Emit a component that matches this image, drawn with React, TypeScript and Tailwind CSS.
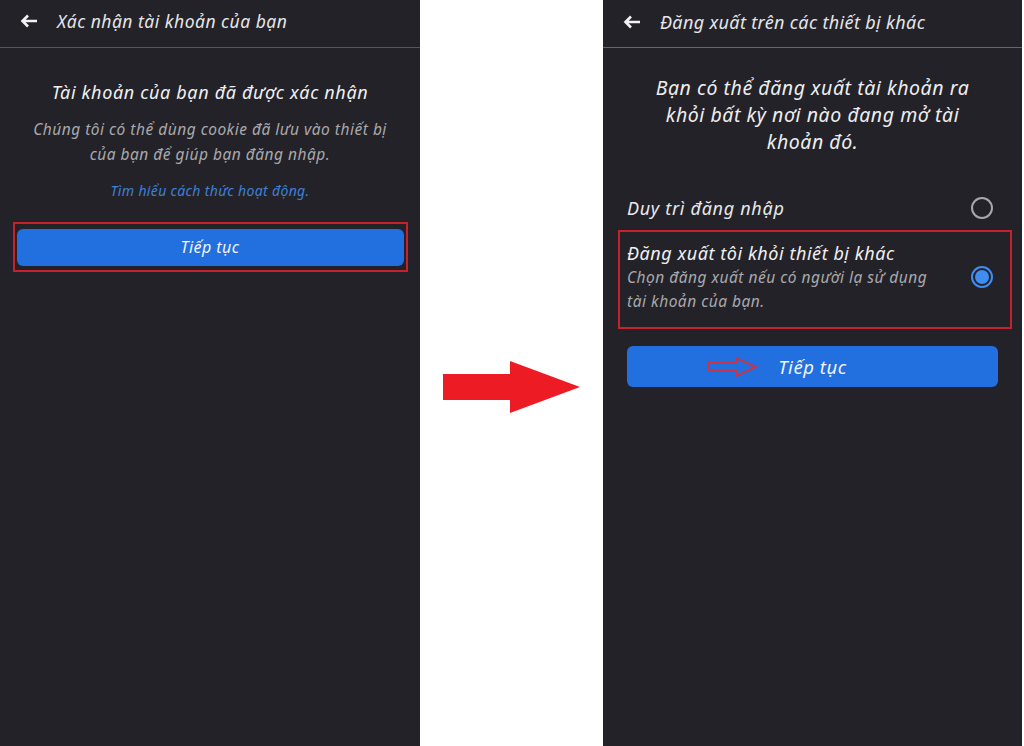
export default function App() {
  return (
    <div className="flex h-[746px] w-[1024px] overflow-hidden bg-white font-['Noto_Sans',sans-serif] italic text-[#e8e8ea]">
      {/* Left phone */}
      <section className="flex h-full w-[420px] flex-col bg-[#232228]">
        <header className="flex h-[48px] shrink-0 items-center border-b border-[#55555a] pb-[6px] pl-[20px]">
          <BackArrow />
          <h1 className="ml-[19px] text-[17.5px] leading-[22px] tracking-[0.5px] text-[#e6e6e8]">Xác nhận tài khoản của bạn</h1>
        </header>
        <div className="flex flex-col items-center px-[12px] pt-[31px]">
          <h2 className="text-[18px] leading-[26px] tracking-[0.65px] text-[#f0f0f2]">Tài khoản của bạn đã được xác nhận</h2>
          <p className="mt-[12px] text-center text-[15.5px] leading-[25px] tracking-[0.5px] text-[#a9a9ad]">
            Chúng tôi có thể dùng cookie đã lưu vào thiết bị
            <br />
            của bạn để giúp bạn đăng nhập.
          </p>
          <a className="mt-[13px] text-[14px] leading-[22px] tracking-[0.35px] text-[#3f80d8]">Tìm hiểu cách thức hoạt động.</a>
          <div className="mt-[20px] flex h-[50px] w-[395px] items-center justify-center border-2 border-[#c8202c] px-[2px]">
            <button className="flex h-[37px] w-full items-center justify-center rounded-[6px] bg-[#226fdf] text-[16px] tracking-[0.45px] text-[#f2f4f8] italic">Tiếp tục</button>
          </div>
        </div>
      </section>

      {/* Gutter */}
      <div className="flex h-full w-[183px] items-start justify-center pt-[361px]">
        <svg width="138" height="53" viewBox="0 0 138 53">
          <polygon points="0,13 67,13 67,0 137,26 67,52 67,39 0,39" fill="#ed1c24" />
        </svg>
      </div>

      {/* Right phone */}
      <section className="flex h-full w-[419px] flex-col bg-[#232228]">
        <header className="flex h-[48px] shrink-0 items-center border-b border-[#66666b] pb-[3px] pl-[20px]">
          <BackArrow />
          <h1 className="ml-[19px] text-[18px] leading-[22px] tracking-[0.35px] text-[#e6e6e8]">Đăng xuất trên các thiết bị khác</h1>
        </header>
        <div className="flex flex-col px-[24px] pt-[26px]">
          <h2 className="text-center text-[19.5px] leading-[27px] tracking-[0.55px] text-[#eeeef0]">
            Bạn có thể đăng xuất tài khoản ra
            <br />
            khỏi bất kỳ nơi nào đang mở tài
            <br />
            khoản đó.
          </h2>
          <div className="mt-[40px] flex h-[26px] items-center justify-between pr-[5px]">
            <span className="text-[18px] tracking-[0.7px] text-[#e8e8ea]">Duy trì đăng nhập</span>
            <span className="h-[22px] w-[22px] rounded-full border-2 border-[#a8a8ac]" />
          </div>
          <div className="mt-[9px] ml-[-9px] mr-[-14px] flex h-[99px] items-center justify-between border-2 border-[#c8202c] pb-[5px] pl-[7px] pr-[17px]">
            <div>
              <div className="text-[18px] leading-[24px] tracking-[0.55px] text-[#f0f0f2]">Đăng xuất tôi khỏi thiết bị khác</div>
              <p className="text-[15.5px] leading-[24px] tracking-[0.5px] text-[#a9a9ad]">
                Chọn đăng xuất nếu có người lạ sử dụng
                <br />
                tài khoản của bạn.
              </p>
            </div>
            <span className="flex h-[22px] w-[22px] items-center justify-center rounded-full border-2 border-[#3f8cf2]">
              <span className="h-[14px] w-[14px] rounded-full bg-[#3f8cf2]" />
            </span>
          </div>
          <button className="relative mt-[17px] flex h-[41px] w-[371px] items-center justify-center rounded-[6px] bg-[#226fdf] text-[18.5px] tracking-[0.55px] text-[#f2f4f8] italic">
            <svg width="52" height="22" viewBox="0 0 52 22" className="absolute left-[80px] top-[10px]">
              <polygon points="2,7 29,7 29,2 49,11 29,20 29,15 2,15" fill="none" stroke="#c8344a" strokeWidth="2" />
            </svg>
            Tiếp tục
          </button>
        </div>
      </section>
      <div className="h-full w-[2px] bg-white" />
    </div>
  );
}

function BackArrow() {
  return (
    <svg width="18" height="14" viewBox="0 0 18 14" className="shrink-0">
      <path d="M17 7H3M8 1.5 2.5 7 8 12.5" fill="none" stroke="#f2f2f4" strokeWidth="2.6" />
    </svg>
  );
}
